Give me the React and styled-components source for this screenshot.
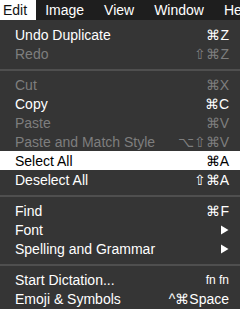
import React from "react";
import styled, { createGlobalStyle } from "styled-components";

const Global = createGlobalStyle`
  html, body {
    margin: 0;
    padding: 0;
    background: #353535;
  }
  body {
    font-family: "Helvetica Neue", "Liberation Sans", Arial, sans-serif;
    -webkit-font-smoothing: antialiased;
  }
`;

const menus = ["Edit", "Image", "View", "Window", "Help"];

const groups = [
  [
    { label: "Undo Duplicate", keys: "⌘Z" },
    { label: "Redo", keys: "⇧⌘Z", disabled: true },
  ],
  [
    { label: "Cut", keys: "⌘X", disabled: true },
    { label: "Copy", keys: "⌘C" },
    { label: "Paste", keys: "⌘V", disabled: true },
    { label: "Paste and Match Style", keys: "⌥⇧⌘V", disabled: true },
    { label: "Select All", keys: "⌘A", active: true },
    { label: "Deselect All", keys: "⇧⌘A" },
  ],
  [
    { label: "Find", keys: "⌘F" },
    { label: "Font", submenu: true },
    { label: "Spelling and Grammar", submenu: true },
  ],
  [
    { label: "Start Dictation...", keys: "fn fn", small: true },
    { label: "Emoji & Symbols", keys: "^⌘Space" },
  ],
];

const Arrow = () => (
  <svg width="9" height="10" viewBox="0 0 9 10">
    <path d="M1 0.5 L8.5 5 L1 9.5 Z" fill="#ffffff" />
  </svg>
);

const App = () => {
  return (
    <Screen>
      <Global />
      <MenuBar>
        {menus.map((m, i) => (
          <BarItem key={m} open={i === 0}>
            {m}
          </BarItem>
        ))}
      </MenuBar>
      <Menu>
        {groups.map((items, gi) => (
          <React.Fragment key={gi}>
            {gi > 0 && <Separator />}
            {items.map((it) => (
              <Row key={it.label} disabled={it.disabled} active={it.active}>
                <Label>{it.label}</Label>
                {it.submenu ? (
                  <Arrow />
                ) : (
                  <Keys small={it.small}>{it.keys}</Keys>
                )}
              </Row>
            ))}
          </React.Fragment>
        ))}
      </Menu>
    </Screen>
  );
};

const Screen = styled.div`
  width: 240px;
  height: 309px;
  overflow: hidden;
  background: #353535;
`;

const MenuBar = styled.div`
  display: flex;
  height: 20px;
  background: #1e1e1e;
  white-space: nowrap;
  overflow: hidden;
`;

const BarItem = styled.div`
  flex: none;
  height: 20px;
  line-height: 20px;
  padding: ${(p) => (p.open ? "0 9px 0 3px" : "0")};
  margin-right: ${(p) => (p.open ? "9px" : "20px")};
  font-size: 14px;
  color: ${(p) => (p.open ? "#111" : "#fff")};
  background: ${(p) => (p.open ? "#fff" : "transparent")};
`;

const Menu = styled.div`
  padding-top: 5px;
`;

const Row = styled.div`
  display: flex;
  align-items: center;
  justify-content: space-between;
  height: 19px;
  padding: 0 11px 0 15px;
  font-size: 14px;
  color: ${(p) => (p.active ? "#000" : p.disabled ? "#7e7e7e" : "#fff")};
  background: ${(p) => (p.active ? "#fff" : "transparent")};
`;

const Label = styled.span`
  white-space: nowrap;
`;

const Keys = styled.span`
  white-space: nowrap;
  font-size: ${(p) => (p.small ? "12px" : "14px")};
`;

const Separator = styled.div`
  height: 2px;
  margin: 6px 0 4px;
  background: #4f4f4f;
`;

export default App;
